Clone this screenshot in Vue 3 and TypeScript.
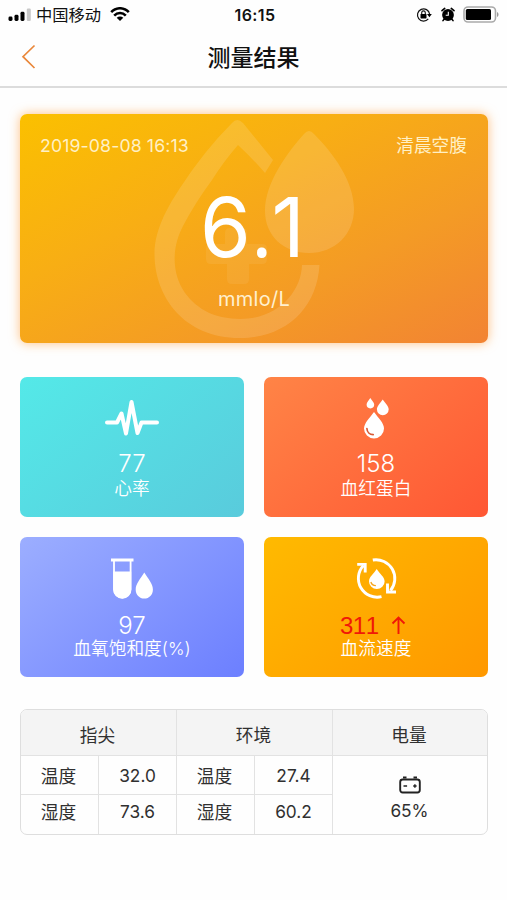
<script setup lang="ts">
interface Metric {
  id: string
  value: string
  label: string
  alert?: boolean
}

const metrics: Metric[] = [
  { id: 'heart', value: '77', label: '心率' },
  { id: 'hemo', value: '158', label: '血红蛋白' },
  { id: 'oxygen', value: '97', label: '血氧饱和度(%)' },
  { id: 'flow', value: '311', label: '血流速度', alert: true },
]
</script>

<template>
  <div class="page">
    <header class="status">
      <div class="status-left">
        <svg class="signal" width="24" height="14" viewBox="0 0 24 14">
          <rect x="0.5" y="8.5" width="4" height="4.5" rx="1.4" />
          <rect x="6.5" y="6.8" width="4" height="6.2" rx="1.4" />
          <rect x="12.5" y="3.8" width="4" height="9.2" rx="1.4" />
          <rect x="18.8" y="0.5" width="4" height="12.5" rx="1.2" fill="#c8c8c8" />
        </svg>
        <span class="carrier">中国移动</span>
        <svg class="wifi" width="20" height="15" viewBox="0 0 20 15">
          <path d="M1.2 5.2C6-.1 14-.1 18.8 5.2M4.2 8.6c3.3-3.5 8.3-3.5 11.6 0" fill="none" stroke="#000" stroke-width="2.5" />
          <path d="M10 14 6.7 10.8c1.9-1.7 4.7-1.7 6.6 0z" />
        </svg>
      </div>
      <span class="clock">16:15</span>
      <div class="status-right">
        <svg width="16" height="16" viewBox="0 0 16 16">
          <path d="M12.3 11.8A6.1 6.1 0 1 1 13.6 7" fill="none" stroke="#111" stroke-width="1.2" />
          <path d="M11 7h4.8l-2.4 3.2z" />
          <rect x="4.5" y="7" width="6" height="4.4" rx=".6" />
          <path d="M5.7 7.3V5.7a1.8 1.8 0 0 1 3.6 0v1.6" fill="none" stroke="#111" stroke-width="1.1" />
        </svg>
        <svg class="alarm" width="14" height="15" viewBox="0 0 14 15">
          <circle cx="7" cy="8" r="5.9" />
          <path d="M1 3.7 3.7 1.4M13 3.7l-2.7-2.3M3 12.2l-1 1.4M11 12.2l1 1.4" stroke="#000" stroke-width="1.6" stroke-linecap="round" />
          <path d="M7.3 4.7v3.6H4.7" fill="none" stroke="#fff" stroke-width="1.1" />
        </svg>
        <svg class="battery" width="37" height="17" viewBox="0 0 37 17">
          <rect x="1" y="1" width="31.5" height="15" rx="4" fill="none" stroke="#aaa" stroke-width="1.6" />
          <rect x="2.8" y="3" width="25.2" height="11" rx="1.5" />
          <path d="M34 6v5c2-.7 2-4.3 0-5z" fill="#999" />
        </svg>
      </div>
    </header>

    <nav class="nav">
      <svg class="back" width="16" height="26" viewBox="0 0 16 26">
        <path d="M14.5 1.5 3 12.7 14.5 24" fill="none" stroke="#e9873a" stroke-width="1.7" />
      </svg>
      <h1>测量结果</h1>
      <span></span>
    </nav>

    <main>
      <section class="hero">
        <svg class="watermark" width="202" height="220" viewBox="152 119 202 220">
          <path d="M232 123Q237 117 243 123L273 160L265 173Q252 158 238 145Q224 161 212 180Q195 203 183 226C173 245 170 271 185 293Q204 319 240 319C277 319 301 293 302 265H319.5C317 308 286 338 240 338C184 338 155 297 154.5 255C154 228 171 202 180 188Q204 151 232 123z" fill="#fff" />
          <path d="M304 134Q309 128 314 134C333 153 354 181 354 209C354 234 335 253 309 253C284 253 265 236 265 211C265 182 288 152 304 134z" fill="#fff" />
          <path d="M230 228h12q5 0 5 5v11h15q5 0 5 5v10q0 5-5 5h-13v15q0 5-5 5h-12q-5 0-5-5v-15h-16q-5 0-5-5v-10q0-5 5-5h14v-11q0-5 5-5z" fill="#fff" opacity=".5" />
        </svg>
        <div class="hero-top">
          <time>2019-08-08 16:13</time>
          <span>清晨空腹</span>
        </div>
        <strong>6<span class="dot">.</span>1</strong>
        <div class="unit">mmlo/L</div>
      </section>

      <section class="tiles">
        <article v-for="m in metrics" :key="m.id" :class="['tile', m.id]">
          <svg v-if="m.id === 'heart'" width="56" height="44" viewBox="0 0 56 44">
            <path d="M3 25.5h10l4.500-9L22 36.500 27.500 5 33.500 36l4-10.500H53" fill="none" stroke="#fff" stroke-width="4" stroke-linecap="round" stroke-linejoin="round" />
          </svg>
          <svg v-else-if="m.id === 'hemo'" width="56" height="44" viewBox="0 0 56 44">
            <path d="M22.3 1C20.7 3.4 18.6 5.6 18.6 7.6a3.8 3.8 0 0 0 7.6 0C26.2 5.6 23.8 3.4 22.3 1zM34.7 2.5C32.5 6 28.9 9.2 28.9 12.3a5.9 5.9 0 0 0 11.8 0C40.7 9.2 37 6 34.7 2.5zM26 15C22 20.5 16 26 16 31.5a10 10 0 0 0 20 0C36 26 30 20.5 26 15z" fill="#fff" />
            <path d="M18.9 31.5c.2 3.6 2.8 6.1 6.3 6.1" fill="none" stroke="#d95a35" stroke-width="1.7" stroke-linecap="round" />
          </svg>
          <svg v-else-if="m.id === 'oxygen'" width="56" height="44" viewBox="0 0 56 44">
            <path d="M7 3h22.5" stroke="#fff" stroke-width="3" />
            <path d="M10 3v29.5a8.2 8.2 0 0 0 16.6 0V3" fill="none" stroke="#fff" stroke-width="1.8" />
            <path d="M9.3 14.5H27.2V32.5a8.9 8.9 0 0 1-17.9 0zM40.3 15.5C36.500 21.500 31.700 27 31.700 32.400c0 5.300 3.700 9.100 8.600 9.100s8.600-3.800 8.600-9.100C48.900 27 44.100 21.500 40.300 15.500z" fill="#fff" />
          </svg>
          <svg v-else width="56" height="44" viewBox="0 0 56 44">
            <g fill="none" stroke="#fff" stroke-width="2.9">
              <path d="M24.8 3A18.8 18.8 0 0 1 42.5 33.5M33.5 39.7A18.8 18.8 0 0 1 15.5 8.5" />
              <path d="M9.2 7.4h8v8M39.5 26.5v8.500h8.500" />
            </g>
            <path d="M28.7 12C25.5 17 21 20 21 24.4a7.8 7.5 0 0 0 15.6 0C36.6 20 31.9 17 28.7 12z" fill="#fff" />
            <path d="M22.9 25c.5 2.3 2.5 3.6 5 3.6" fill="none" stroke="#f6a51c" stroke-width="1.3" />
          </svg>
          <div class="value" :class="{ alert: m.alert }">
            <span>{{ m.value }}</span>
            <svg v-if="m.alert" width="15" height="20" viewBox="0 0 15 20">
              <path d="M7.5 18V1.5M1.5 7.5 7.5 1.5l6 6" fill="none" stroke="#f01808" stroke-width="1.9" />
            </svg>
          </div>
          <div class="label">{{ m.label }}</div>
        </article>
      </section>

      <section class="grid">
        <div class="cell head wide">指尖</div>
        <div class="cell head wide">环境</div>
        <div class="cell head last">电量</div>
        <div class="cell">温度</div>
        <div class="cell num">32.0</div>
        <div class="cell">温度</div>
        <div class="cell num">27.4</div>
        <div class="cell power last bottom">
          <svg width="22" height="18" viewBox="0 0 22 18">
            <rect x="1.2" y="3.5" width="19.6" height="13" rx="2.5" fill="none" stroke="#222" stroke-width="1.9" />
            <path d="M4 1.6h3.5M14.5 1.6H18" stroke="#222" stroke-width="2" />
            <path d="M4.5 10h3.6M14.2 10h3.4M15.9 8.3v3.4" stroke="#222" stroke-width="1.4" />
          </svg>
          <span>65%</span>
        </div>
        <div class="cell bottom">湿度</div>
        <div class="cell num bottom">73.6</div>
        <div class="cell bottom">湿度</div>
        <div class="cell num bottom">60.2</div>
      </section>
    </main>
  </div>
</template>

<style>
body {
  background: #fefefe;
}
</style>

<style scoped>
.page {
  width: 507px;
  height: 900px;
  overflow: hidden;
  background: #fefefe;
  color: #303030;
  font-family: Inter, "Noto Sans CJK SC", sans-serif;
}
svg {
  display: block;
  flex: none;
}
.status {
  height: 29px;
  display: grid;
  grid-template-columns: 1fr auto 1fr;
  align-items: center;
  padding: 0 7px 0 8px;
  color: #111;
}
.status-left,
.status-right {
  display: flex;
  align-items: center;
}
.status-right {
  justify-content: flex-end;
}
.carrier {
  margin: 2px 9px 0 4px;
  font-size: 16.3px;
  line-height: 27px;
}
.clock {
  padding-left: 2px;
  font-size: 16px;
  font-weight: 600;
  letter-spacing: 0.4px;
}
.alarm {
  margin: 0 8px 0 9px;
}
.nav {
  height: 58px;
  box-sizing: border-box;
  border-bottom: 2px solid #dcdcdc;
  margin-top: 1px;
  display: grid;
  grid-template-columns: 1fr auto 1fr;
  align-items: center;
  padding: 0 20px 2px;
}
.nav h1 {
  margin: 1px 0 0;
  color: #111;
  font-size: 23px;
  font-weight: 500;
  line-height: 34px;
}
main {
  padding: 26px 19px 0 20px;
}
.hero {
  position: relative;
  height: 229px;
  border-radius: 7px;
  background: linear-gradient(153deg, #fbc000 0%, #f8ae14 36%, #f49b25 68%, #f28333 100%);
  box-shadow: 0 0 11px rgba(255, 151, 48, 0.6);
  color: #fff;
  text-align: center;
}
.watermark {
  position: absolute;
  left: 132px;
  top: 5px;
  opacity: 0.13;
}
.hero-top {
  position: relative;
  display: flex;
  justify-content: space-between;
  padding: 18px 21px 0 20px;
  height: 27px;
  line-height: 27px;
  color: #fff0c5;
  font-size: 17.7px;
}
.hero-top time {
  letter-spacing: 0.12px;
}
.hero strong {
  position: relative;
  display: block;
  margin-top: 19px;
  height: 100px;
  line-height: 100px;
  padding-right: 3px;
  font-size: 82px;
  font-weight: 400;
}
.dot {
  margin: 0 -1px 0 0;
  font-family: "Open Sans", sans-serif;
  line-height: 1;
}
.unit {
  position: relative;
  margin-top: 8px;
  font-size: 20px;
  line-height: 26px;
  letter-spacing: 0.3px;
  color: #fff0cf;
}
.tiles {
  display: grid;
  grid-template-columns: 1fr 1fr;
  gap: 20px;
  margin-top: 34px;
}
.tile {
  height: 140px;
  box-sizing: border-box;
  padding-top: 20px;
  border-radius: 7px;
  display: flex;
  flex-direction: column;
  align-items: center;
  color: #fff;
}
.heart {
  background: linear-gradient(140deg, #54e9e8, #59cbdc);
}
.hemo {
  background: linear-gradient(140deg, #ff8446, #ff5734);
}
.oxygen {
  background: linear-gradient(140deg, #9caeff, #6c7fff);
}
.flow {
  background: linear-gradient(140deg, #ffba00, #ff9800);
}
.value {
  height: 22px;
  margin-top: 12px;
  display: flex;
  align-items: center;
  font-size: 24px;
  line-height: 22px;
  font-weight: 300;
}
.heart .value,
.hemo .value {
  margin-bottom: 3px;
}
.oxygen .value,
.flow .value {
  margin-top: 14px;
  margin-bottom: 1px;
}
.value.alert {
  gap: 12px;
  width: 72px;
  color: #f01808;
  font-family: "Liberation Sans", sans-serif;
  font-weight: 400;
}
.alert span {
  font-kerning: none;
  letter-spacing: -0.5px;
}
.label {
  font-size: 17.7px;
  line-height: 22px;
  font-weight: 350;
}
.grid {
  display: grid;
  grid-template-columns: 78px 78px 78px 78px 1fr;
  grid-template-rows: 46px 39px 39px;
  margin-top: 32px;
  border: 1px solid #dedede;
  border-radius: 7px;
  overflow: hidden;
  font-size: 17.7px;
}
.cell {
  box-sizing: border-box;
  border-right: 1px solid #e2e2e2;
  border-bottom: 1px solid #e2e2e2;
  padding-right: 2px;
  display: flex;
  align-items: center;
  justify-content: center;
}
.num {
  padding-right: 0;
  font-size: 17.3px;
}
.head {
  background: #f4f4f4;
  padding-top: 2px;
}
.wide {
  grid-column: span 2;
}
.last {
  border-right: 0;
}
.bottom {
  border-bottom: 0;
  padding-bottom: 7px;
}
.power {
  grid-row: span 2;
  flex-direction: column;
  gap: 6px;
  padding: 12px 1px 5px 0;
}
.power span {
  font-size: 17.3px;
  line-height: 22px;
}
</style>
